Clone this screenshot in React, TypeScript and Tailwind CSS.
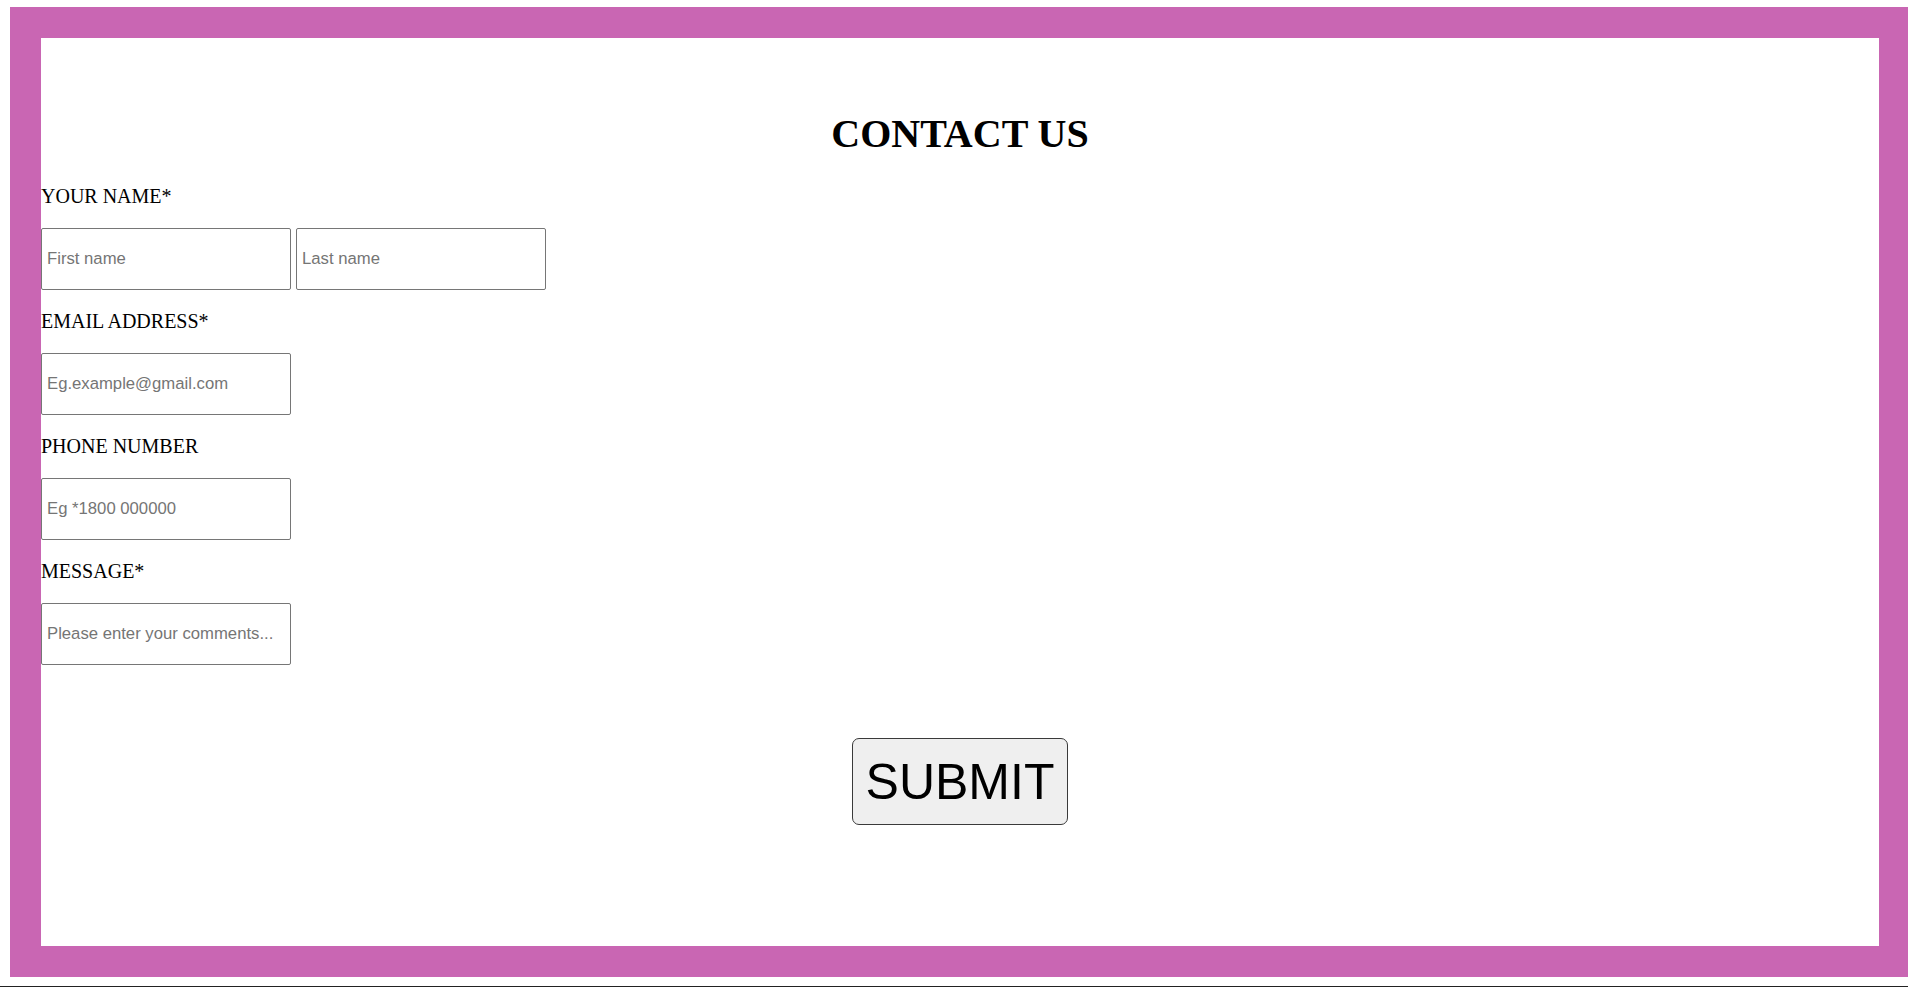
export default function App() {
  const label = "block text-[20px] leading-[23px] text-black";
  const field =
    "block h-[62px] w-[250px] rounded-[2px] border border-[#767676] bg-white px-[5px] text-[16.7px] text-black placeholder:text-[#757575] outline-none";

  return (
    <div
      className="flex h-[987px] w-full flex-col overflow-hidden bg-white"
      style={{ fontFamily: '"Liberation Serif", "Times New Roman", serif' }}
    >
      <div className="mt-[7px] ml-[10px] h-[970px] w-[1900px] shrink-0 border-[31px] border-[#c966b3] bg-white">
        <form className="flex flex-col">
          <h1 className="mt-[73px] mb-[28px] text-center text-[40px] leading-[46px] font-bold text-black">
            CONTACT US
          </h1>

          <label className={label}>YOUR NAME*</label>
          <div className="mt-[20px] mb-[20px] flex gap-[5px]" style={{ fontFamily: '"Liberation Sans", Arial, sans-serif' }}>
            <input placeholder="First name" className={field} />
            <input placeholder="Last name" className={field} />
          </div>

          <label className={label}>EMAIL ADDRESS*</label>
          <div className="mt-[20px] mb-[20px]" style={{ fontFamily: '"Liberation Sans", Arial, sans-serif' }}>
            <input type="email" placeholder="Eg.example@gmail.com" className={field} />
          </div>

          <label className={label}>PHONE NUMBER</label>
          <div className="mt-[20px] mb-[20px]" style={{ fontFamily: '"Liberation Sans", Arial, sans-serif' }}>
            <input placeholder="Eg *1800 000000" className={field} />
          </div>

          <label className={label}>MESSAGE*</label>
          <div className="mt-[20px]" style={{ fontFamily: '"Liberation Sans", Arial, sans-serif' }}>
            <input placeholder="Please enter your comments..." className={field} />
          </div>

          <div className="mt-[73px] flex justify-center">
            <button
              type="button"
              className="flex h-[87px] w-[216px] items-center justify-center rounded-[7px] border-[1.5px] border-[#3a3a3a] bg-[#efefef] text-[50px] leading-none text-black"
              style={{ fontFamily: '"Liberation Sans", Arial, sans-serif' }}
            >
              SUBMIT
            </button>
          </div>
        </form>
      </div>
      <div className="mt-auto h-px w-full bg-[#222]" />
    </div>
  );
}
